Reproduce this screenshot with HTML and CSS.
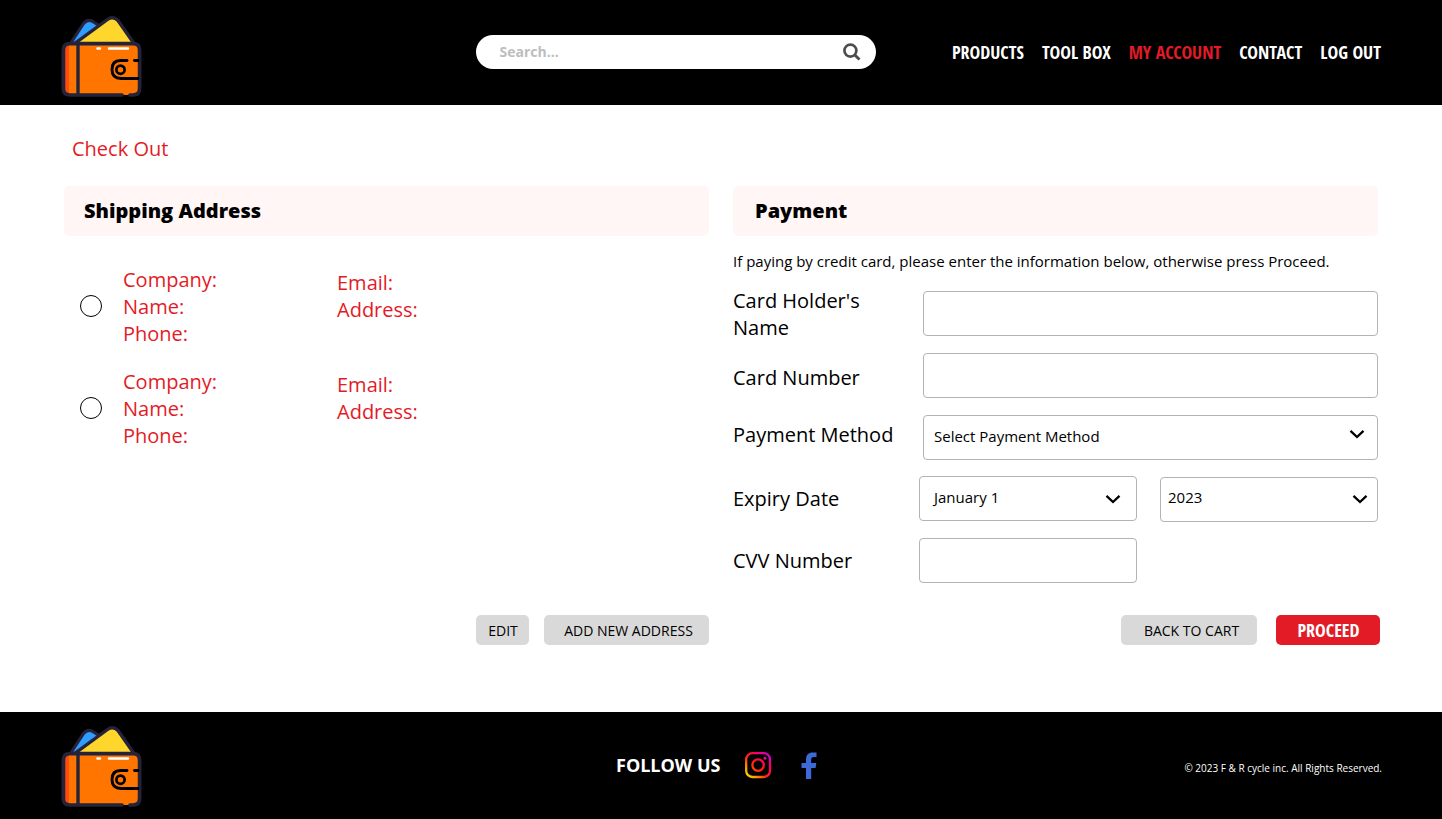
FILE: index.html
```html
<!DOCTYPE html>
<html lang="en">
<head>
<meta charset="utf-8">
<title>Check Out</title>
<link rel="stylesheet" href="styles.css">
</head>
<body>
<svg class="defs" width="0" height="0" aria-hidden="true">
  <symbol id="wallet" viewBox="0 0 100 97">
    <path d="M18.500 35.500 L31.500 15.500 Q35 10.800 40 13 L47 17.500 L49 20 L25 36 Z" fill="#2f9dff" stroke="#25233a" stroke-width="3.200" stroke-linejoin="round"/>
    <path d="M22.500 35.700 L55.500 11.500 Q61 7.500 66 12.500 L82 35.500 Z" fill="#ffd62b" stroke="#25233a" stroke-width="3.400" stroke-linejoin="round"/>
    <rect x="11.500" y="35.700" width="76.200" height="51.300" rx="6.500" fill="#ff7500"/>
    <path d="M17 37 V85.500 Q13 85 13 80 V42 Q13 38 17 37Z" fill="#ff4b0c"/>
    <path d="M26 36 V87" stroke="#25233a" stroke-width="3.400"/>
    <path d="M70 87 H18 Q11.400 87 11.400 80.500 V42 Q11.400 35.700 18 35.700 H81 Q87.600 35.700 87.600 42 V80.500 Q87.600 87 81 87 H78" fill="none" stroke="#25233a" stroke-width="3.700" stroke-linecap="round"/>
    <path d="M45.500 40.500 H48 M57 40.500 H76" stroke="#fff" stroke-width="2.400" stroke-linecap="round"/>
    <path d="M75 52.500 H68.500 Q60 52.500 60 61.500 Q60 70.500 69 70.500 H86 M82.500 52.500 H86" fill="none" stroke="#000" stroke-width="2.900" stroke-linecap="round"/>
    <circle cx="68.500" cy="61.700" r="4.100" fill="none" stroke="#000" stroke-width="2.700"/>
  </symbol>
  <symbol id="chevron" viewBox="0 0 16 10">
    <path d="M1.500 1.800 L8 8 L14.500 1.800" fill="none" stroke="#000" stroke-width="2.300"/>
  </symbol>
</svg>

<header class="header">
  <svg class="logo" width="100" height="97"><use href="#wallet"/></svg>
  <div class="search">
    <span>Search...</span>
    <svg width="18" height="18" viewBox="0 0 18 18"><circle cx="7.400" cy="7.600" r="6" fill="none" stroke="#4d4d4d" stroke-width="2.700"/><path d="M11.800 12 L16.500 16.500" stroke="#4d4d4d" stroke-width="3"/></svg>
  </div>
  <nav class="nav">
    <a>PRODUCTS</a><a>TOOL BOX</a><a class="active">MY ACCOUNT</a><a>CONTACT</a><a>LOG OUT</a>
  </nav>
</header>

<main class="main">
  <h1 class="title">Check Out</h1>
  <div class="columns">
    <section class="column">
      <h2 class="heading shipping">Shipping Address</h2>
      <div class="addresses">
        <div class="address"><i class="radio"></i><div class="who">Company:<br>Name:<br>Phone:</div><div class="where">Email:<br>Address:</div></div>
        <div class="address"><i class="radio"></i><div class="who">Company:<br>Name:<br>Phone:</div><div class="where">Email:<br>Address:</div></div>
      </div>
      <div class="actions">
        <button class="btn edit">EDIT</button>
        <button class="btn add">ADD NEW ADDRESS</button>
      </div>
    </section>
    <section class="column">
      <h2 class="heading">Payment</h2>
      <p class="note">If paying by credit card, please enter the information below, otherwise press Proceed.</p>
      <div class="form">
        <div class="row holder"><label>Card Holder's<br>Name</label><div class="field"></div></div>
        <div class="row number"><label>Card Number</label><div class="field"></div></div>
        <div class="row method"><label>Payment Method</label><div class="field"><span>Select Payment Method</span><svg width="16" height="10"><use href="#chevron"/></svg></div></div>
        <div class="row split expiry"><label>Expiry Date</label><div class="field month"><span>January 1</span><svg width="16" height="10"><use href="#chevron"/></svg></div><div class="field year"><span>2023</span><svg width="16" height="10"><use href="#chevron"/></svg></div></div>
        <div class="row split cvv"><label>CVV Number</label><div class="field"></div></div>
      </div>
      <div class="actions pay">
        <button class="btn back">BACK TO CART</button>
        <button class="btn proceed">PROCEED</button>
      </div>
    </section>
  </div>
</main>

<footer class="footer">
  <svg class="logo" width="100" height="97"><use href="#wallet"/></svg>
  <div class="follow">
    <strong>FOLLOW US</strong>
    <svg class="insta" width="28" height="28" viewBox="0 0 28 28">
      <defs>
        <linearGradient id="ig" x1="0" y1="1" x2="1" y2="0"><stop offset="0" stop-color="#ffe000"/><stop offset=".2" stop-color="#ff9a00"/><stop offset=".42" stop-color="#ff2a12"/><stop offset=".68" stop-color="#ff0055"/><stop offset="1" stop-color="#c800e0"/></linearGradient>
        <linearGradient id="lens" x1="0" y1="1" x2="1" y2="0"><stop offset="0" stop-color="#ff4a00"/><stop offset=".5" stop-color="#ff1a1a"/><stop offset="1" stop-color="#ff0060"/></linearGradient>
      </defs>
      <rect x="2.200" y="2.200" width="23.800" height="23.800" rx="6.200" fill="none" stroke="url(#ig)" stroke-width="2.300"/>
      <circle cx="14.100" cy="14.100" r="5.700" fill="none" stroke="url(#lens)" stroke-width="2.300"/>
      <circle cx="21" cy="7.200" r="1.500" fill="#e600a0"/>
    </svg>
    <svg class="facebook" width="16" height="28" viewBox="0 0 16 28"><path d="M5 27 V16 H.500 V11 H5 V7.500 C5 3 7.500 .500 11.500 .500 H15.500 V5 H12.800 C10.800 5 10.200 6 10.200 7.600 V11 H15.300 L14.600 16 H10.200 V27 Z" fill="#3d6ad6"/></svg>
  </div>
  <p class="copyright">© 2023 F &amp; R cycle inc. All Rights Reserved.</p>
</footer>
</body>
</html>
```
FILE: styles.css
```css
* { box-sizing: border-box; }
body { margin: 0; width: 1442px; height: 819px; background: #fff; color: #000; font-family: "Open Sans", sans-serif; font-size: 20px; line-height: 27px; display: flex; flex-direction: column; overflow: hidden; }
.defs { position: absolute; }
svg { display: block; flex: none; }
h1, h2, p { margin: 0; }

.header { height: 105px; background: #000; display: flex; align-items: flex-start; padding: 0 61px 0 52px; }
.header .logo { margin-top: 8px; }
.search { margin: 35px 0 0 323.500px; width: 400.500px; height: 34px; border-radius: 17px; background: #fff; display: flex; align-items: center; justify-content: space-between; padding: 0 15px 0 24px; font-size: 14px; font-weight: 700; color: #bdbdbd; }
.search span { margin-top: -2px; }
.nav { margin: 39px 0 0 auto; display: flex; gap: 18px; color: #fff; font-size: 18px; font-weight: 700; font-family: "Open Sans Condensed", "Open Sans", sans-serif; font-stretch: 75%; white-space: nowrap; }
.nav .active { color: #e31b27; }

.main { height: 607px; padding: 30px 64px 0; }
.title { padding-left: 8px; font-size: 20px; font-weight: 400; color: #e31b27; }
.columns { display: grid; grid-template-columns: 645px 645px; gap: 24px; margin-top: 24px; }
.column { display: flex; flex-direction: column; height: 459px; }
.heading { height: 50px; border-radius: 5px; background: #fff6f5; padding-left: 22px; font-size: 20px; font-weight: 800; line-height: 50px; }
.heading.shipping { padding-left: 20px; }
.addresses { display: grid; gap: 21px; margin-top: 30px; color: #e31b27; }
.address { display: grid; grid-template-columns: 43px 214px 1fr; padding-left: 16px; height: 81px; }
.radio { width: 22px; height: 22px; border: 1px solid #000; border-radius: 50%; margin-top: 29px; }
.where { margin-top: 3px; }
.actions { display: flex; justify-content: flex-end; gap: 15px; margin-top: auto; }
.actions.pay { gap: 19px; margin-right: -2px; }
.btn { height: 30px; border: 0; border-radius: 5px; background: #d9d9d9; color: #000; font: 14px/30px "Open Sans", sans-serif; padding: 1px 0 0; white-space: nowrap; }
.edit { width: 53px; padding-left: 1px; }
.add { width: 165px; padding-left: 4px; }
.back { width: 136px; padding-left: 5px; }
.proceed { width: 104px; padding: 0 0 1px 1px; background: #e31b27; color: #fff; font-family: "Open Sans Condensed", "Open Sans", sans-serif; font-size: 18px; font-weight: 700; font-stretch: 75%; }

.note { margin-top: 12px; font-size: 15px; white-space: nowrap; }
.form { display: grid; gap: 17px; margin-top: 16px; }
.row { height: 45px; display: grid; grid-template-columns: 190px 455px; grid-template-rows: 45px; align-items: center; }
.row.split { grid-template-columns: 186px 218px 218px; }
.row.split .year { margin: 1px -23px -1px 23px; }
.holder label { margin-top: 1px; }
.number label { margin-top: 4px; }
.method label { margin-top: -6px; }
.expiry { margin-top: -1px; }
.field { height: 45px; border: 1px solid #b3b3b3; border-radius: 4px; display: flex; align-items: center; justify-content: space-between; font-size: 15px; padding: 0 12.500px 0 10px; }
.method span { margin-top: -2px; }
.method svg { margin-top: -8px; }
.month { padding: 0 15.500px 0 14px; }
.month span { margin-top: -2px; }
.month svg { margin-top: 1px; }
.year { padding: 0 9.500px 0 7px; }
.year span { margin-top: -4px; }
.year svg { margin-top: -1px; }

.footer { height: 107px; background: #000; color: #fff; display: flex; align-items: flex-start; padding: 0 60px 0 52px; }
.footer .logo { margin-top: 6px; }
.follow { display: flex; margin: 39px 0 0 464px; font-size: 18px; white-space: nowrap; }
.follow strong { margin-top: 1px; }
.insta { margin-left: 24px; }
.facebook { margin: 1px 0 0 28.500px; }
.copyright { margin: 43px 0 0 auto; font-size: 10px; white-space: nowrap; }
```
